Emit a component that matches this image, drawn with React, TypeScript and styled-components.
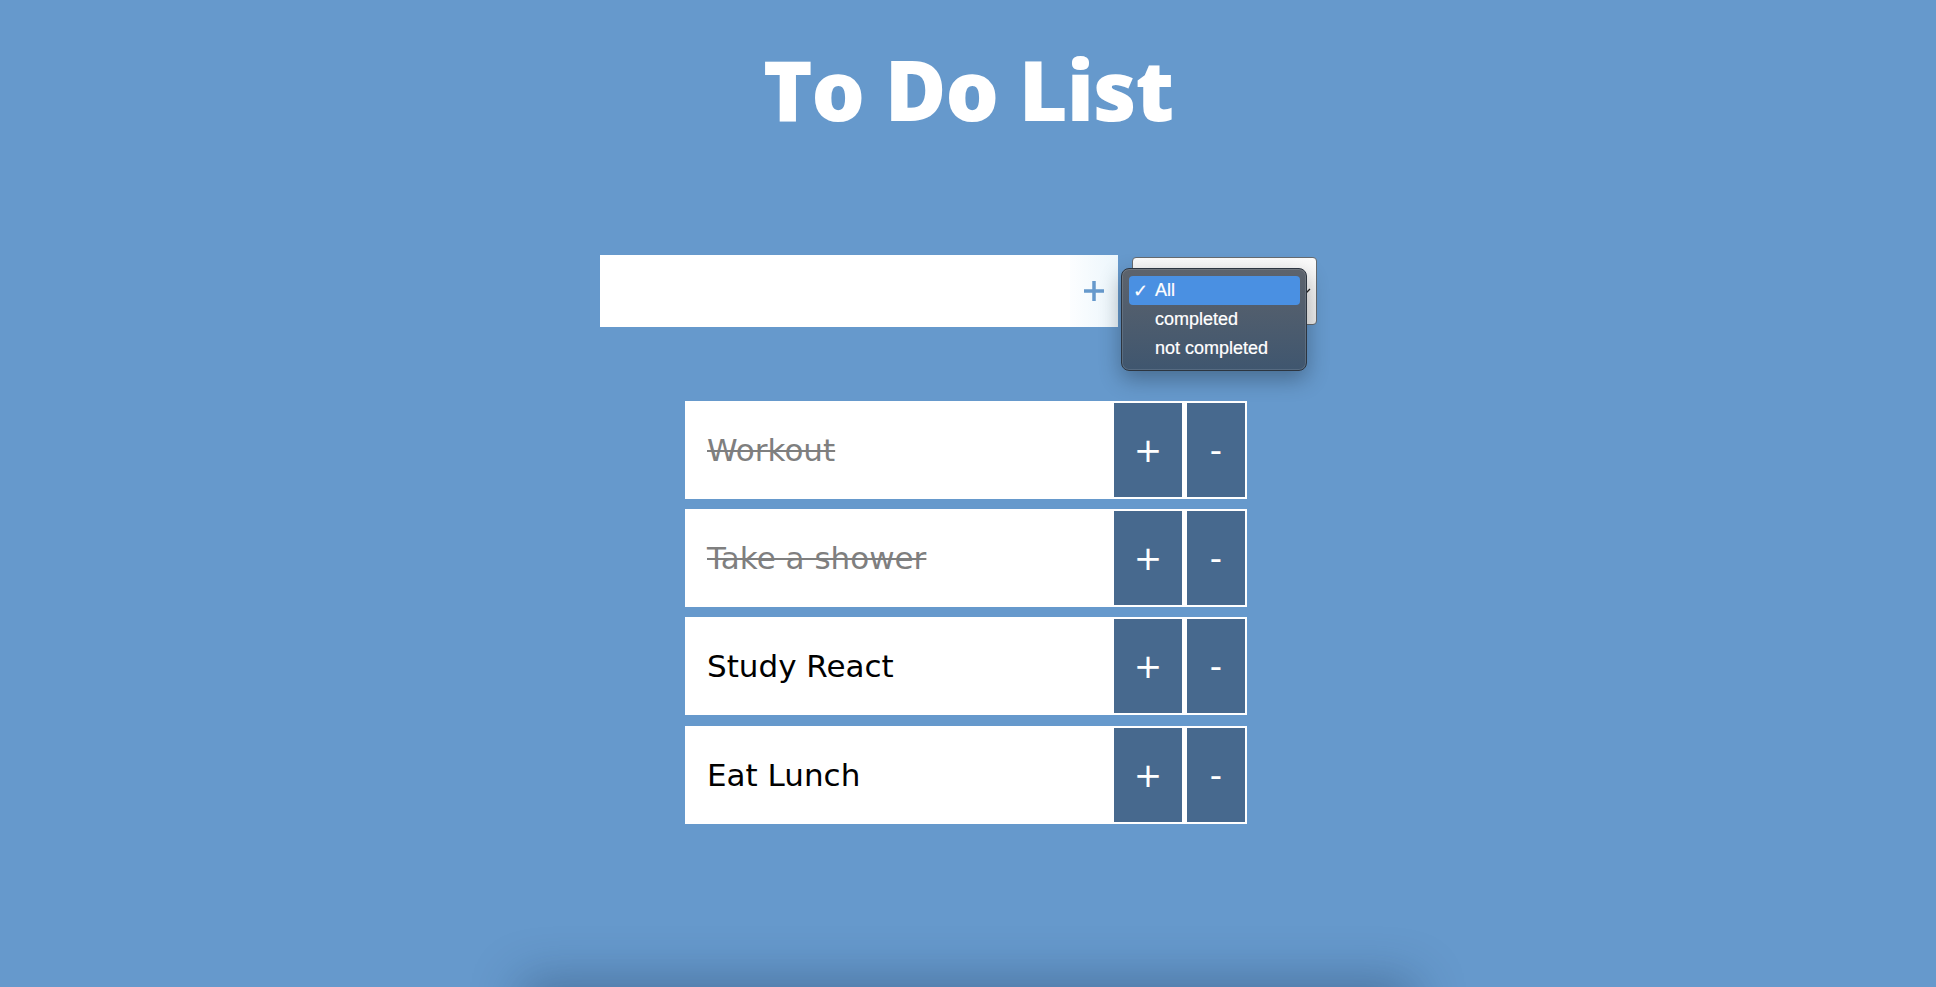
import React from "react";
import styled, { createGlobalStyle } from "styled-components";

const Global = createGlobalStyle`
  html, body {
    margin: 0;
    padding: 0;
    background: #6699cc;
    overflow: hidden;
  }
  body {
    font-family: "DejaVu Sans", sans-serif;
  }
  * { box-sizing: border-box; }
`;

const Page = styled.main`
  min-height: 987px;
  display: flex;
  flex-direction: column;
  align-items: center;
`;

const Title = styled.h1`
  margin: 47px 0 0;
  font-family: "Open Sans", sans-serif;
  font-weight: 800;
  font-size: 84px;
  line-height: 1;
  color: #ffffff;
  letter-spacing: -1px;
`;

const Form = styled.form`
  margin: 124px 0 0 -19px;
  display: flex;
  align-items: center;
  gap: 14px;
`;

const InputBox = styled.div`
  width: 518px;
  height: 72px;
  background: #ffffff;
  display: flex;
  align-items: stretch;
`;

const TextInput = styled.input`
  flex: 1;
  border: none;
  outline: none;
  background: transparent;
  font-family: "DejaVu Sans", sans-serif;
  font-size: 24px;
  padding: 0 16px;
`;

const AddButton = styled.button`
  width: 48px;
  border: none;
  padding: 0;
  background: linear-gradient(to right, rgba(240, 248, 255, 0.2), rgba(236, 246, 252, 1));
  display: flex;
  align-items: center;
  justify-content: center;
  cursor: pointer;
`;

const SelectWrap = styled.div`
  position: relative;
  width: 185px;
  height: 68px;
`;

const SelectBox = styled.div`
  width: 100%;
  height: 100%;
  border: 1px solid #666b70;
  border-radius: 4px;
  background: linear-gradient(#fbfbfb, #ededed);
  display: flex;
  align-items: center;
  justify-content: flex-end;
  padding-right: 5px;
`;

const Popup = styled.ul`
  position: absolute;
  left: -11px;
  top: 11px;
  width: 186px;
  margin: 0;
  padding: 7px 6px 7px 7px;
  list-style: none;
  border-radius: 8px;
  background: linear-gradient(#5d636c, #3f566f);
  border: 1px solid #2c3540;
  box-shadow: inset 0 0 0 1px rgba(255, 255, 255, 0.12), 0 8px 22px rgba(0, 0, 0, 0.3);
  font-family: "Liberation Sans", Arial, sans-serif;
  font-size: 18px;
  color: #ffffff;
  z-index: 2;
`;

const Option = styled.li<{ $active?: boolean }>`
  height: 29px;
  display: flex;
  align-items: center;
  padding-left: 26px;
  position: relative;
  border-radius: 4px;
  background: ${(p) => (p.$active ? "#4a90e2" : "transparent")};
  -webkit-text-stroke: 0.2px #ffffff;
`;

const Check = styled.span`
  position: absolute;
  left: 4px;
  top: 50%;
  transform: translateY(-52%);
  font-family: "DejaVu Sans", sans-serif;
  font-size: 18px;
`;

const List = styled.ul`
  margin: 74px 0 0 -4px;
  padding: 0;
  list-style: none;
  width: 562px;
  display: flex;
  flex-direction: column;
  gap: 10.2px;
`;

const Item = styled.li`
  height: 98px;
  background: #ffffff;
  display: flex;
  align-items: stretch;
  padding: 2px 2px 2px 0;
`;

const ItemText = styled.span<{ $done?: boolean }>`
  flex: 1;
  display: flex;
  align-items: center;
  padding-left: 22px;
  font-family: "DejaVu Sans", sans-serif;
  font-size: 31px;
  color: ${(p) => (p.$done ? "#7f7f7f" : "#000000")};
  text-decoration: ${(p) => (p.$done ? "line-through" : "none")};
  text-decoration-thickness: 2px;
`;

const ActionButton = styled.button<{ $w: number; $gap?: number }>`
  width: ${(p) => p.$w}px;
  margin-right: ${(p) => p.$gap ?? 0}px;
  border: none;
  padding: 0;
  background: #47698e;
  color: #ffffff;
  font-family: "DejaVu Sans", sans-serif;
  font-size: 34px;
  line-height: 1;
  display: flex;
  align-items: center;
  justify-content: center;
  cursor: pointer;
`;

const Footer = styled.div`
  width: 880px;
  height: 40px;
  margin: 0 auto;
  background: #6699cc;
  box-shadow: 0 0 50px 6px rgba(20, 40, 70, 0.35);
`;

const todos = [
  { text: "Workout", done: true },
  { text: "Take a shower", done: true },
  { text: "Study React", done: false },
  { text: "Eat Lunch", done: false },
];

export default function App() {
  return (
    <>
      <Global />
      <Page>
        <Title>To Do List</Title>
        <Form onSubmit={(e) => e.preventDefault()}>
          <InputBox>
            <TextInput type="text" />
            <AddButton type="submit" aria-label="add">
              <svg width="22" height="22" viewBox="0 0 22 22">
                <path d="M11 1v20M1 11h20" stroke="#6699cc" strokeWidth="3.5" fill="none" />
              </svg>
            </AddButton>
          </InputBox>
          <SelectWrap>
            <SelectBox>
              <svg width="8" height="6" viewBox="0 0 8 6">
                <path d="M1 1l3 3 3-3" stroke="#222" strokeWidth="1.3" fill="none" />
              </svg>
            </SelectBox>
            <Popup>
              <Option $active>
                <Check>✓</Check>All
              </Option>
              <Option>completed</Option>
              <Option>not completed</Option>
            </Popup>
          </SelectWrap>
        </Form>
        <List>
          {todos.map((t) => (
            <Item key={t.text}>
              <ItemText $done={t.done}>{t.text}</ItemText>
              <ActionButton $w={68} $gap={5}>+</ActionButton>
              <ActionButton $w={58}>-</ActionButton>
            </Item>
          ))}
        </List>
      </Page>
      <Footer />
    </>
  );
}
